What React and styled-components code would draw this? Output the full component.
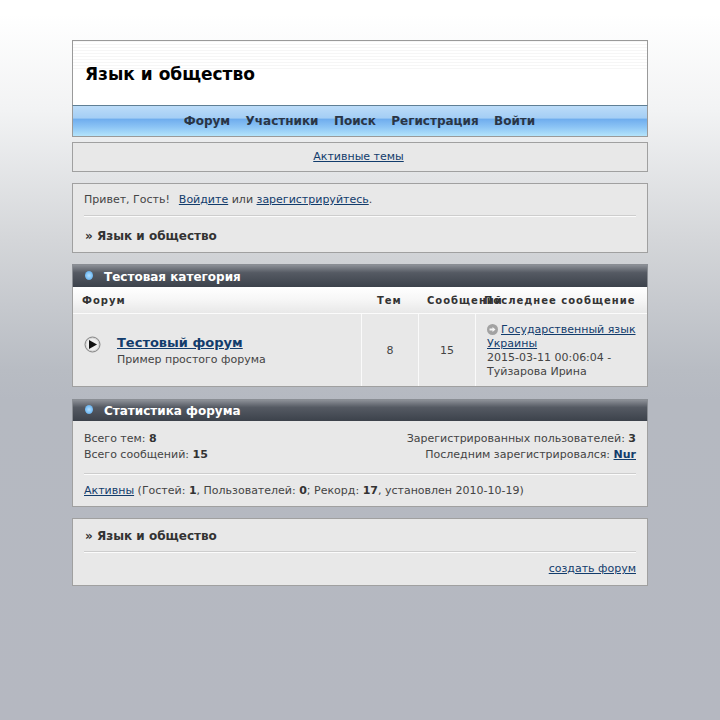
import React from "react";
import styled, { createGlobalStyle } from "styled-components";

const Global = createGlobalStyle`
  html, body { margin: 0; padding: 0; min-height: 720px; }
  body {
    font-family: "DejaVu Sans", sans-serif;
    font-size: 11px;
    color: #333;
    background: linear-gradient(180deg, #ffffff 0, #ffffff 14px, #f2f3f4 110px, #d4d6d9 240px, #b8bcc3 370px, #b5b9c1 400px, #b5b8c1 720px) no-repeat;
    background-color: #b5b8c1;
  }
`;

const Page = styled.div`
  width: 576px;
  margin: 0 auto;
  padding-top: 40px;
  display: flex;
  flex-direction: column;
`;

const Header = styled.header`
  box-sizing: border-box;
  height: 66px;
  border: 1px solid #9a9a9a;
  border-bottom: 1px solid #5f7f95;
  background:
    repeating-linear-gradient(180deg, #f6f6f6 0 1px, #ffffff 1px 3px) 0 0 / 100% 30px no-repeat,
    #fff;
  padding: 22px 12px 0;
`;

const Title = styled.h1`
  margin: 0;
  font-size: 17px;
  line-height: 22px;
  font-weight: bold;
  color: #000;
`;

const Nav = styled.nav`
  box-sizing: border-box;
  height: 31px;
  border: 1px solid #9a9a9a;
  border-top: 0;
  display: flex;
  justify-content: center;
  align-items: center;
  gap: 15.4px;
  padding-right: 1px;
  padding-bottom: 1px;
  background: linear-gradient(180deg, #bcdcf8 0, #a4cef5 40%, #6fadee 44%, #8cc4f5 70%, #b4e4fb 100%);
`;

const NavItem = styled.span`
  font-size: 12px;
  font-weight: bold;
  color: #2a3545;
`;

const Box = styled.section`
  box-sizing: border-box;
  margin-top: ${(p) => p.$mt}px;
  height: ${(p) => p.$h}px;
  border: 1px solid #a0a0a0;
  background: #e8e8e8;
  padding: ${(p) => p.$pad || "0 11px"};
`;

const CenterBox = styled(Box)`
  display: flex;
  justify-content: center;
  align-items: center;
  padding-right: 14px;
`;

const Link = styled.a`
  color: #123c6c;
  text-decoration: underline;
`;

const Text = styled.div`
  font-size: 11px;
  line-height: ${(p) => p.$lh || 14}px;
  color: #444;
  b { color: #333; }
`;

const SubText = styled(Text)`
  margin-top: 2px;
`;

const GapLink = styled(Link)`
  margin-left: 9px;
`;

const Rule = styled.hr`
  margin: ${(p) => p.$m};
  border: 0;
  height: 2px;
  background: linear-gradient(180deg, #cdcdcd 0 1px, #fbfbfb 1px 2px);
`;

const Crumb = styled.div`
  font-size: 12px;
  line-height: 16px;
  font-weight: bold;
  color: #333;
  padding-left: 1px;
`;

const CatBar = styled.div`
  height: ${(p) => p.$h}px;
  box-sizing: border-box;
  display: flex;
  align-items: center;
  gap: 11px;
  padding: ${(p) => p.$pt || 0}px 0 0 12px;
  background: linear-gradient(180deg, #8c9097 0, #555a63 35%, #3c424b 100%);
  color: #fff;
  font-size: 12px;
  font-weight: bold;
  border: 1px solid #8a8e94;
  border-bottom: 0;
`;

const Ball = styled.span`
  width: 8px;
  height: 9px;
  margin-top: -2px;
  border-radius: 50%;
  background: radial-gradient(circle at 50% 50%, #b4e0ff 0, #74bcf5 60%, #5d8cb0 100%);
  flex: none;
`;

const Card = styled.section`
  margin-top: ${(p) => p.$mt}px;
`;

const Body = styled.div`
  box-sizing: border-box;
  border: 1px solid #a0a0a0;
  border-top: 0;
  background: #e8e8e8;
`;

const StatsBody = styled(Body)`
  height: 86px;
  padding: 10px 11px 0;
`;

const HeadRow = styled.div`
  display: grid;
  grid-template-columns: 288px 57px 57px 1fr;
  height: 26px;
  align-items: center;
  background: linear-gradient(180deg, #ffffff 0, #f6f6f6 50%, #e8e8e8 100%);
  border-bottom: 1px solid #fbfbfb;
`;

const HeadCell = styled.div`
  font-size: 10px;
  font-weight: bold;
  letter-spacing: 1px;
  white-space: nowrap;
  color: #333;
  padding-left: ${(p) => p.$pl}px;
`;

const Row = styled.div`
  display: grid;
  grid-template-columns: 288px 57px 57px 1fr;
  height: 72px;
`;

const ForumCell = styled.div`
  display: flex;
  align-items: center;
  padding-left: 11px;
  gap: 16px;
`;

const ForumText = styled.div`
  padding-top: 2px;
`;

const ForumName = styled.a`
  display: block;
  font-size: 13px;
  line-height: 16px;
  font-weight: bold;
  color: #123c6c;
  text-decoration: underline;
`;

const ForumMark = styled.svg`
  flex: none;
  margin-top: -12px;
`;

const NumCell = styled.div`
  border-left: 1px solid #fafafa;
  display: flex;
  align-items: center;
  justify-content: center;
  font-size: 11px;
  color: #444;
`;

const LastCell = styled.div`
  border-left: 1px solid #fafafa;
  padding: 9px 6px 0 11px;
  font-size: 11px;
  line-height: 14px;
  color: #444;
`;

const LastMark = styled.svg`
  vertical-align: -2px;
  margin-right: 3px;
`;

const StatsGrid = styled.div`
  display: flex;
  justify-content: space-between;
`;

const Right = styled(Text)`
  text-align: right;
`;

const NurLink = styled(Link)`
  font-weight: bold;
`;

const EndRow = styled.div`
  text-align: right;
`;

function ForumIcon() {
  return (
    <ForumMark width="17" height="17" viewBox="0 0 17 17">
      <circle cx="8.5" cy="8.5" r="7.5" fill="#d4d4d4" stroke="#858585" strokeWidth="1" />
      <circle cx="8.5" cy="8.5" r="6" fill="#eeeeee" />
      <path d="M5 4l8 4.5-8 4.5z" fill="#111" />
    </ForumMark>
  );
}

function LastIcon() {
  return (
    <LastMark width="11" height="11" viewBox="0 0 11 11">
      <circle cx="5.5" cy="5.5" r="5.5" fill="#a2a2a2" />
      <path d="M2.5 4.5h3V3l3 2.5-3 2.5V6.5h-3z" fill="#f4f4f4" />
    </LastMark>
  );
}

export default function App() {
  return (
    <>
      <Global />
      <Page>
        <Header>
          <Title>Язык и общество</Title>
        </Header>
        <Nav>
          <NavItem>Форум</NavItem>
          <NavItem>Участники</NavItem>
          <NavItem>Поиск</NavItem>
          <NavItem>Регистрация</NavItem>
          <NavItem>Войти</NavItem>
        </Nav>

        <CenterBox $mt={5} $h={30}>
          <Text><Link href="#">Активные темы</Link></Text>
        </CenterBox>

        <Box $mt={11} $h={70} $pad="9px 11px 0">
          <Text>
            Привет, Гость!<GapLink href="#">Войдите</GapLink> или{" "}
            <Link href="#">зарегистрируйтесь</Link>.
          </Text>
          <Rule $m="8px 0 11px" />
          <Crumb>» Язык и общество</Crumb>
        </Box>

        <Card $mt={11}>
          <CatBar $h={23} $pt={1}><Ball />Тестовая категория</CatBar>
          <Body>
            <HeadRow>
              <HeadCell $pl={9}>Форум</HeadCell>
              <HeadCell $pl={16}>Тем</HeadCell>
              <HeadCell $pl={9}>Сообщений</HeadCell>
              <HeadCell $pl={9}>Последнее сообщение</HeadCell>
            </HeadRow>
            <Row>
              <ForumCell>
                <ForumIcon />
                <ForumText>
                  <ForumName href="#">Тестовый форум</ForumName>
                  <SubText>Пример простого форума</SubText>
                </ForumText>
              </ForumCell>
              <NumCell>8</NumCell>
              <NumCell>15</NumCell>
              <LastCell>
                <LastIcon /><Link href="#">Государственный язык Украины</Link>
                <br />2015-03-11 00:06:04 - Туйзарова Ирина
              </LastCell>
            </Row>
          </Body>
        </Card>

        <Card $mt={12}>
          <CatBar $h={22}><Ball />Статистика форума</CatBar>
          <StatsBody>
            <StatsGrid>
              <Text $lh={16}>
                Всего тем: <b>8</b><br />Всего сообщений: <b>15</b>
              </Text>
              <Right $lh={16}>
                Зарегистрированных пользователей: <b>3</b><br />
                Последним зарегистрировался: <NurLink href="#">Nur</NurLink>
              </Right>
            </StatsGrid>
            <Rule $m="10px 0 9px" />
            <Text>
              <Link href="#">Активны</Link> (Гостей: <b>1</b>, Пользователей: <b>0</b>; Рекорд: <b>17</b>, установлен 2010-10-19)
            </Text>
          </StatsBody>
        </Card>

        <Box $mt={11} $h={68} $pad="9px 11px 0">
          <Crumb>» Язык и общество</Crumb>
          <Rule $m="7px 0 9px" />
          <EndRow><Text><Link href="#">создать форум</Link></Text></EndRow>
        </Box>
      </Page>
    </>
  );
}
